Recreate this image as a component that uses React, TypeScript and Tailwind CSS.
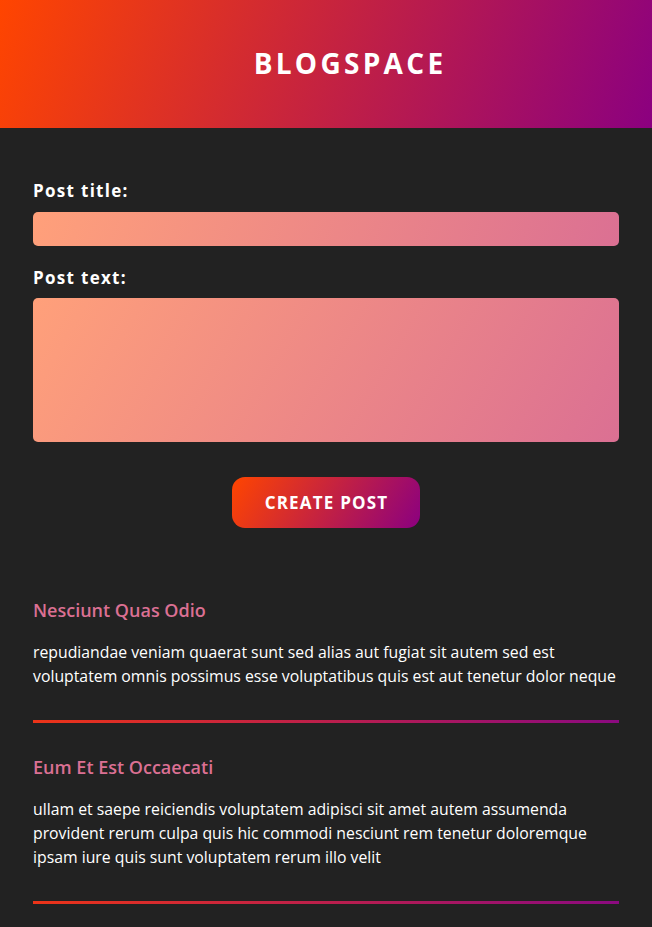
const posts = [
  {
    title: "Nesciunt Quas Odio",
    body: "repudiandae veniam quaerat sunt sed alias aut fugiat sit autem sed est voluptatem omnis possimus esse voluptatibus quis est aut tenetur dolor neque",
  },
  {
    title: "Eum Et Est Occaecati",
    body: "ullam et saepe reiciendis voluptatem adipisci sit amet autem assumenda provident rerum culpa quis hic commodi nesciunt rem tenetur doloremque ipsam iure quis sunt voluptatem rerum illo velit",
  },
];

export default function App() {
  return (
    <div className="min-h-[927px] bg-[#222222] text-white font-['Open_Sans',sans-serif]">
      <header className="h-32 flex items-center justify-center pl-[48px] bg-[linear-gradient(110deg,#ff4500,#8b0080)]">
        <h1 className="text-[28px] font-bold tracking-[3.3px] mt-[-3px]">BLOGSPACE</h1>
      </header>

      <main className="px-[33px] pt-[51px]">
        <form className="flex flex-col">
          <label className="text-[17px] font-bold tracking-[1.3px] leading-6">Post title:</label>
          <input
            type="text"
            className="mt-[9px] h-[34px] rounded-[5px] bg-[linear-gradient(110deg,#ffa07a,#db7093)] outline-none"
          />
          <label className="mt-[20px] text-[17px] font-bold tracking-[1.3px] leading-6">Post text:</label>
          <textarea className="mt-[8px] h-[144px] rounded-[5px] bg-[linear-gradient(120deg,#ffa07a,#db7093)] resize-none outline-none" />
          <button
            type="button"
            className="self-center mt-[35px] w-[188px] h-[51px] rounded-[13px] bg-[linear-gradient(120deg,#ff4500,#8b0080)] text-[17px] font-bold tracking-[1.2px] pl-[1px]"
          >
            CREATE POST
          </button>
        </form>

        <div className="mt-[70px] flex flex-col gap-[32px]">
          {posts.map((post) => (
            <article key={post.title}>
              <h2 className="text-[18px] font-semibold text-[#db7093] leading-6">{post.title}</h2>
              <p className="mt-[18px] text-[15.8px] leading-6">{post.body}</p>
              <div className="mt-[32px] h-[3px] bg-[linear-gradient(90deg,#ec3418,#8b0a80)]" />
            </article>
          ))}
        </div>
      </main>
    </div>
  );
}
